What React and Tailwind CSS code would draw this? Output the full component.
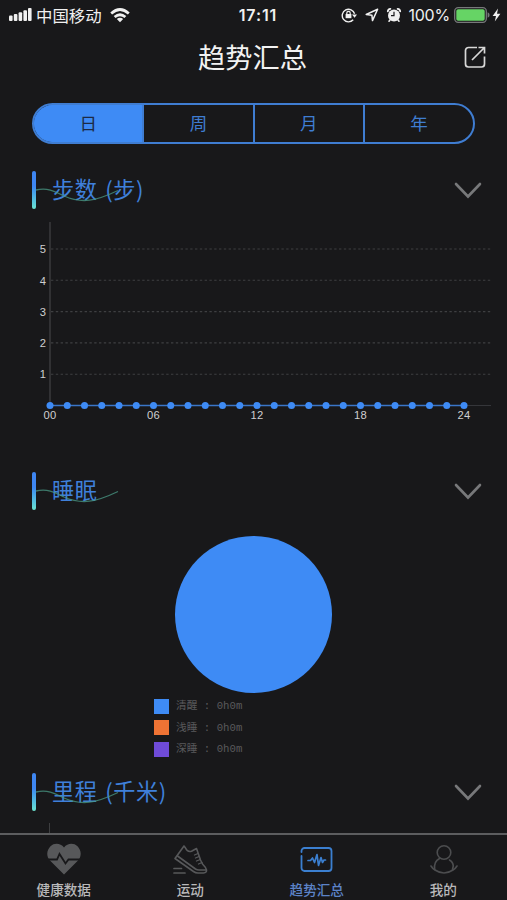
import React, { useState } from 'react';

const PERIODS = ['日', '周', '月', '年'];

const SLEEP_LEGEND = [
    { label: '清醒', value: '0h0m', color: 'bg-[#3e8bf5]' },
    { label: '浅睡', value: '0h0m', color: 'bg-[#ee7334]' },
    { label: '深睡', value: '0h0m', color: 'bg-[#6f4bd8]' },
];

const TABS = [
    { label: '健康数据', icon: HeartIcon },
    { label: '运动', icon: ShoeIcon },
    { label: '趋势汇总', icon: TrendIcon },
    { label: '我的', icon: UserIcon },
];

export default function App() {
    const [period, setPeriod] = useState(0);
    const [tab, setTab] = useState(2);

    return (
        <div className="w-[507px] h-[900px] bg-[#18181a] flex flex-col overflow-hidden font-['Noto_Sans_CJK_SC',sans-serif]">
            <StatusBar />

            <header className="h-[54px] shrink-0 grid grid-cols-[1fr_auto_1fr] items-center pr-5">
                <h1 className="col-start-2 pl-[18px] text-[27.2px] leading-[52px] text-[#f2f2f2] -mt-[2px]">趋势汇总</h1>
                <button className="justify-self-end">
                    <ShareIcon />
                </button>
            </header>

            <main className="flex-1 min-h-0 overflow-hidden pt-[19px]">
                <div className="ml-8 w-[443px] h-[41px] flex rounded-full border-2 border-[#3f7dd2] bg-[#18181a] overflow-hidden">
                    {PERIODS.map((name, i) => (
                        <button
                            key={name}
                            onClick={() => setPeriod(i)}
                            className={`flex-1 pb-px text-[17.5px] leading-[36px] ${i > 0 ? 'border-l-2 border-[#3f7dd2]' : ''} ${period === i ? 'bg-[#3e8bf5] text-[#1c2a44] rounded-l-full ring-2 ring-[#3e8bf5]' : 'text-[#3f7dd2]'}`}
                        >
                            {name}
                        </button>
                    ))}
                </div>

                <div className="mt-[27px]">
                    <SectionHeader title="步数 (步)" />
                </div>
                <StepsChart />

                <div className="mt-[42px]">
                    <SectionHeader title="睡眠" />
                </div>
                <div className="mt-[26px] mx-auto size-[157px] rounded-full bg-[#3e8bf5]" />
                <ul className="mt-[5px] ml-[154px] h-[59px] flex flex-col justify-between">
                    {SLEEP_LEGEND.map(item => (
                        <li key={item.label} className="h-4 flex items-center gap-[7px]">
                            <span className={`size-[15px] ${item.color}`} />
                            <span className="font-['Liberation_Mono','Noto_Sans_CJK_SC',monospace] text-[10.7px] leading-4 text-[#5a5a5c] whitespace-pre">
                                {item.label} : {item.value}
                            </span>
                        </li>
                    ))}
                </ul>

                <div className="mt-[16px]">
                    <SectionHeader title="里程 (千米)" />
                </div>
                {/* top of the next chart's axis, cut by the tab bar */}
                <div className="mt-[12px] ml-[49px] w-px h-6 bg-[#3d3e40]" />
            </main>

            <nav className="h-[67px] shrink-0 border-t-2 border-[#5c5d5f] grid grid-cols-4 pr-px">
                {TABS.map(({ label, icon: Icon }, i) => (
                    <button
                        key={label}
                        onClick={() => setTab(i)}
                        className={`flex flex-col items-center pt-[7px] ${tab === i ? 'text-[#3b7fd0]' : 'text-[#57585a]'}`}
                    >
                        <Icon />
                        <span className={`mt-[3px] ml-px text-[13.6px] leading-5 font-medium ${tab === i ? 'text-[#5c83c8]' : 'text-[#b9b9ba]'}`}>{label}</span>
                    </button>
                ))}
            </nav>
        </div>
    );
}

function StatusBar() {
    return (
        <div className="h-[30px] shrink-0 grid grid-cols-[1fr_auto_1fr] items-center pl-[9px] pr-[5px] text-[#f0f0f0]">
            <div className="flex items-center">
                <svg width="23" height="14" viewBox="0 0 23 14" fill="currentColor">
                    <rect x="0" y="7.5" width="3.6" height="5.5" rx="1" />
                    <rect x="4.8" y="6" width="3.6" height="7" rx="1" />
                    <rect x="9.6" y="4.2" width="3.6" height="8.8" rx="1" />
                    <rect x="14.4" y="2.2" width="3.6" height="10.8" rx="1" />
                    <rect x="19" y="0" width="3.6" height="13" rx="1" />
                </svg>
                <span className="ml-[4px] -mt-px text-[16.4px] leading-[30px]">中国移动</span>
                <svg className="ml-[8px]" width="20" height="15" viewBox="0 0 20 15" fill="none" stroke="currentColor" strokeWidth="2.7">
                    <path d="M1.2 5.4Q10 -2.4 18.8 5.4" />
                    <path d="M4.6 9.1Q10 4.4 15.4 9.1" />
                    <path d="M10 14.2L6.8 11.1Q10 8.6 13.2 11.1Z" fill="currentColor" stroke="none" />
                </svg>
            </div>
            <span className="pl-[5px] pt-px font-['Inter',sans-serif] text-[16px] leading-[29px] font-semibold tracking-[0.9px]">17:11</span>
            <div className="flex items-center justify-end">
                {/* rotation lock */}
                <svg width="16" height="16" viewBox="0 0 16 16" fill="none" stroke="currentColor" strokeWidth="1.4">
                    <path d="M12.2 12.8A6.3 6.3 0 1 1 13.6 6.8" />
                    <path d="M11 7.6H16L13.6 10.8Z" fill="currentColor" stroke="none" />
                    <rect x="4.6" y="7" width="5.8" height="4.2" fill="currentColor" stroke="none" />
                    <path d="M5.8 7.3V6A1.7 1.7 0 0 1 9.2 6V7.3" strokeWidth="1.2" />
                </svg>
                <svg className="ml-[8px]" width="14" height="14" viewBox="0 0 14 14" fill="none" stroke="currentColor" strokeWidth="1.5" strokeLinejoin="round">
                    <path d="M12.6 1.2L1.2 6.5L6.9 7.2L7.5 12.6Z" />
                </svg>
                <svg className="ml-[7px]" width="16" height="16" viewBox="0 0 16 16">
                    <g fill="none" stroke="currentColor" strokeLinecap="round">
                        <path d="M1.8 4.4Q2 2.2 4.4 1.9M14.2 4.4Q14 2.2 11.6 1.9" strokeWidth="1.8" />
                        <path d="M4 13L3 14.2M12 13L13 14.2" strokeWidth="1.6" />
                    </g>
                    <circle cx="8" cy="8.4" r="6" fill="currentColor" />
                    <path d="M8 4.8V8.6H5" fill="none" stroke="#18181a" strokeWidth="1.2" />
                </svg>
                <span className="ml-[6px] font-['Inter',sans-serif] text-[16px] leading-[30px] tracking-[-0.2px]">100%</span>
                <svg className="ml-[4px]" width="36" height="16" viewBox="0 0 36 16">
                    <rect x="0.7" y="0.7" width="31.6" height="14.6" rx="3.5" fill="none" stroke="#77787a" strokeWidth="1.3" />
                    <rect x="2.3" y="2.3" width="28.4" height="11.4" rx="1.8" fill="#66d465" />
                    <path d="M33.6 5.2Q35.6 5.8 35.6 8T33.6 10.8Z" fill="#77787a" />
                </svg>
                <svg className="ml-[2px] mr-[1px]" width="9" height="14" viewBox="0 0 9 14" fill="currentColor">
                    <path d="M6 0.6L0.6 8H4L2.8 13.4L8.4 5.8H5Z" />
                </svg>
            </div>
        </div>
    );
}

function SectionHeader({ title }) {
    return (
        <div className="h-[38px] pl-8 pr-[25px] flex items-center justify-between">
            <div className="relative flex items-center h-full">
                <span className="w-1 h-[38px] rounded-full bg-linear-to-b from-[#3e86f2] from-40% to-[#6ce3cf]" />
                <h2 className="ml-4 pb-[4px] text-[22.2px] leading-[34px] tracking-[0.6px] [word-spacing:2px] text-[#3f80da]">{title}</h2>
                <svg className="absolute left-1 top-3 pointer-events-none" width="84" height="22" viewBox="0 0 84 22" fill="none">
                    <path d="M0 7C12 4 20 9 28 13C46 21 60 18 82 7.500" stroke="#4a9a86" strokeOpacity="0.75" strokeWidth="1.3" />
                </svg>
            </div>
            <svg width="28" height="18" viewBox="0 0 28 18" fill="none" stroke="#77787a" strokeWidth="2.6" strokeLinecap="round">
                <path d="M2 3L14 15.500L26 3" />
            </svg>
        </div>
    );
}

function StepsChart() {
    const hours = Array.from({ length: 25 }, (_, i) => i);
    const x = hour => 50 + hour * 17.25;
    const y = steps => 196.5 - steps * 31.3;

    return (
        <svg className="block" width="507" height="221" viewBox="0 0 507 221">
            <path d="M50 13V196.5" stroke="#434446" strokeWidth="1.2" />
            <path d="M50 196.500H491" stroke="#35363a" strokeWidth="1.2" />
            <g className="font-['Liberation_Sans',sans-serif] text-[11.2px] tracking-[0.4px]" fill="#cfcfd0">
                {[1, 2, 3, 4, 5].map(n => (
                    <g key={n}>
                        <path d={`M51 ${y(n)}H491`} stroke="#3e3f41" strokeWidth="1.1" strokeDasharray="2.4 2.4" />
                        <text x="46.4" y={y(n) + 4.2} textAnchor="end">{n}</text>
                    </g>
                ))}
                {[0, 6, 12, 18, 24].map(h => (
                    <text key={h} x={x(h)} y="210" textAnchor="middle">{String(h).padStart(2, '0')}</text>
                ))}
            </g>
            <path d={`M50 196.500H${x(24)}`} stroke="#3a76c8" strokeWidth="1.6" />
            {hours.map(h => (
                <circle key={h} cx={x(h)} cy="196.5" r="3.5" fill="#3e8bf5" />
            ))}
        </svg>
    );
}

function ShareIcon() {
    return (
        <svg width="24" height="24" viewBox="0 0 24 24" fill="none" stroke="#d8d8d8" strokeWidth="1.7">
            <path d="M14 2.500H5.500A3 3 0 0 0 2.500 5.500V19A3 3 0 0 0 5.500 22H18.500A3 3 0 0 0 21.500 19V11.500" />
            <path d="M9 15L21 3M15.500 2.500H21.500V8.500" />
        </svg>
    );
}

function HeartIcon() {
    return (
        <svg className="ml-[2px]" width="36" height="34" viewBox="0 0 36 34">
            <path d="M18 5.400C21.500 0.800 28 0.800 31.500 4.200C35.600 8.300 35.800 14.500 32 18.500L18 32.500L4 18.500C0.200 14.500 0.400 8.300 4.500 4.200C8 0.800 14.500 0.800 18 5.400Z" fill="currentColor" />
            <path d="M0 17.500H11L13.500 12L19.500 21.500L22.500 17.500H36" fill="none" stroke="#18181a" strokeWidth="1.8" />
        </svg>
    );
}

function ShoeIcon() {
    return (
        <svg className="ml-px" width="36" height="34" viewBox="0 0 36 34" fill="none" stroke="currentColor" strokeWidth="1.6" strokeLinejoin="round" strokeLinecap="round">
            <path d="M12 4L3 16.500L21.500 29.500Q23.500 31 26 31H31.500Q35 30.500 34.500 28Q34 25.500 30.500 22L28.500 18L24.500 6.500L19.500 9.200Q15.500 10.500 13.500 6Z" />
            <path d="M5.500 14L23.500 27Q25 28 27 28H34" />
            <path d="M22.500 13L26 11.500M23.500 16L27 14.500M24.500 19L28.200 17.500M26.500 22L30 20.500" strokeWidth="1.3" />
            <path d="M2 26.500H9.500M2 31H13" strokeWidth="1.7" />
        </svg>
    );
}

function TrendIcon() {
    return (
        <svg className="ml-[2px]" width="36" height="34" viewBox="0 0 36 34" fill="none" stroke="currentColor" strokeWidth="1.8" strokeLinejoin="round" strokeLinecap="round">
            <path d="M2.500 10V9A3 3 0 0 1 5.500 6H29.500A3 3 0 0 1 32.500 9V26A3 3 0 0 1 29.500 29H5.500A3 3 0 0 1 2.500 26V14" />
            <path d="M9 18.500H11.500L13.500 16L15.500 20.500L18 12.500L19.500 23.500L22 15.500L23.500 20.500L25 18H26.500" strokeWidth="1.7" />
        </svg>
    );
}

function UserIcon() {
    return (
        <svg className="ml-[2px]" width="36" height="34" viewBox="0 0 36 34" fill="none" stroke="#4c4d4f" strokeWidth="1.6" strokeLinecap="round">
            <circle cx="18" cy="10.500" r="6.800" />
            <path d="M13.500 16.500Q7.500 19.500 8.700 27.500M23.500 18Q27 20 27.300 24L26.500 27.500" />
            <path d="M5 24Q6.500 26.500 9 28Q18 34 27 28Q29.500 26.500 31 24" />
        </svg>
    );
}
